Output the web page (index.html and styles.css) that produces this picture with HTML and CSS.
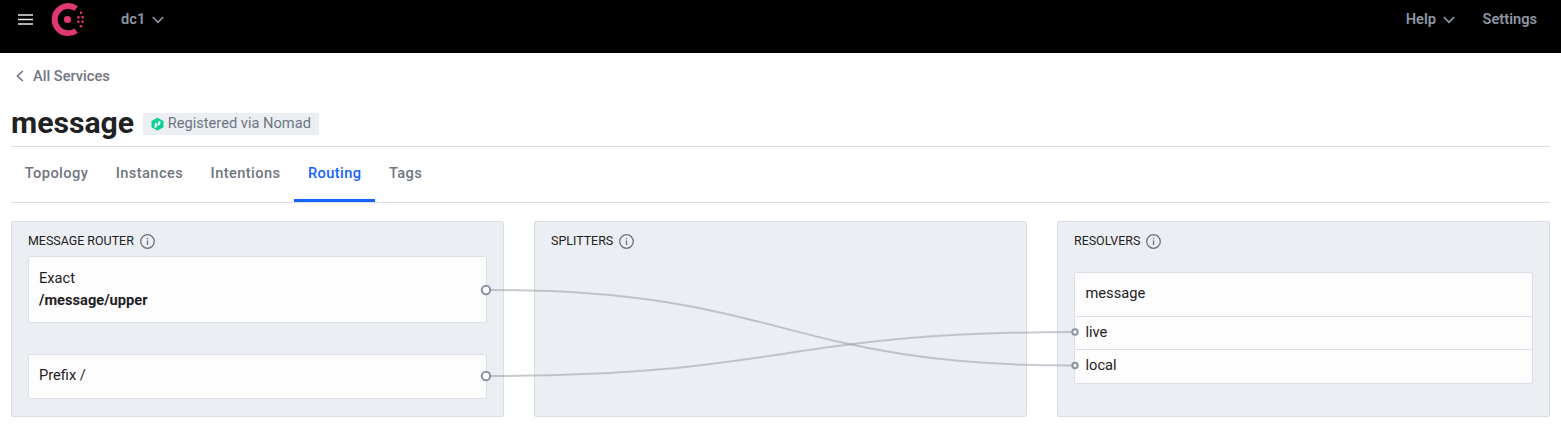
FILE: index.html
```html
<!DOCTYPE html>
<html lang="en">
<head>
<meta charset="utf-8">
<title>message - Consul</title>
<link rel="stylesheet" href="styles.css">
</head>
<body>
<header class="topbar">
  <svg class="menu-icon" width="15" height="11" viewBox="0 0 15 11"><path d="M0 1h15M0 5.5h15M0 10h15" stroke="#e6eaee" stroke-width="1.6"/></svg>
  <svg class="logo" width="34" height="34" viewBox="0 0 34 34" fill="#e03875">
    <path d="M26.9 29.9A16.5 16.5 0 1 1 26.9 3.3L23.4 7.8A10.7 10.7 0 1 0 23.4 25.4Z"/>
    <circle cx="16.5" cy="16.5" r="3.6"/>
    <circle cx="30" cy="9.7" r="1.3"/><circle cx="27.4" cy="14.2" r="1.3"/><circle cx="31.6" cy="14.2" r="1.3"/>
    <circle cx="27.4" cy="18.8" r="1.3"/><circle cx="31.6" cy="18.8" r="1.3"/><circle cx="30" cy="23.3" r="1.3"/>
  </svg>
  <a class="nav-link datacenter">dc1 <svg width="12" height="8" viewBox="0 0 12 8"><path d="M.8 1l5.2 5.3L11.2 1"/></svg></a>
  <a class="nav-link help">Help <svg width="12" height="8" viewBox="0 0 12 8"><path d="M.8 1l5.2 5.3L11.2 1"/></svg></a>
  <a class="nav-link">Settings</a>
</header>
<main class="page">
  <a class="back"><svg width="8" height="12" viewBox="0 0 8 12"><path d="M6.8 1L1.5 6l5.3 5"/></svg>All Services</a>
  <div class="title-row">
    <h1>message</h1>
    <span class="badge"><svg width="13" height="14" viewBox="0 0 12 14"><path fill="#06d092" d="M6 .7l6 3.2v6.4l-6 3.200-6-3.200V3.900z"/><path fill="#fff" d="M3.200 6.600L5 5.500v1.500l1.600.6V4.800L8.800 3.900v3.600L7 8.600 5.300 8V10l-2.100 1z"/></svg>Registered via Nomad</span>
  </div>
  <nav class="tabs">
    <a>Topology</a><a>Instances</a><a>Intentions</a><a class="selected">Routing</a><a>Tags</a>
  </nav>
  <div class="chain">
    <section class="panel">
      <h2>MESSAGE ROUTER <svg class="info" width="15" height="15" viewBox="0 0 15 15"><circle cx="7.500" cy="7.500" r="6.800"/><path d="M7.500 6.500v4.500M7.500 4v1.300"/></svg></h2>
      <div class="card route exact">Exact<b>/message/upper</b></div>
      <div class="card route">Prefix /</div>
    </section>
    <section class="panel">
      <h2>SPLITTERS <svg class="info" width="15" height="15" viewBox="0 0 15 15"><circle cx="7.500" cy="7.500" r="6.800"/><path d="M7.500 6.500v4.500M7.500 4v1.300"/></svg></h2>
    </section>
    <section class="panel">
      <h2>RESOLVERS <svg class="info" width="15" height="15" viewBox="0 0 15 15"><circle cx="7.500" cy="7.500" r="6.800"/><path d="M7.500 6.500v4.500M7.500 4v1.300"/></svg></h2>
      <div class="card resolver">
        <div class="name">message</div>
        <div class="subset">live</div>
        <div class="subset">local</div>
      </div>
    </section>
    <svg class="edges" width="1539" height="196" viewBox="11 221 1539 196">
      <path d="M490 290C782.500 290 782.500 365.500 1073 365.500"/>
      <path d="M490 376C782.500 376 782.500 332 1073 332"/>
      <circle cx="486" cy="290" r="4.200"/><circle cx="486" cy="376" r="4.200"/>
      <circle cx="1075" cy="332" r="2.700"/><circle cx="1075" cy="365.500" r="2.700"/>
    </svg>
  </div>
</main>
</body>
</html>
```
FILE: styles.css
```css
* { box-sizing: border-box; }
body { margin: 0; background: #fff; color: #1f2124; font: 14.650px/22px Roboto, sans-serif; }
svg { display: block; flex: none; }

.topbar { display: flex; height: 53px; padding: 0 24px 0 18px; background: #000; }
.menu-icon { margin-top: 14px; }
.logo { margin: 3px 0 0 18px; }
.nav-link { display: flex; gap: 6.500px; height: 22px; margin-top: 8px; align-items: center; color: #8e96a3; font-weight: 600; }
.nav-link svg, .back svg { fill: none; stroke: currentColor; stroke-width: 1.7; }
.nav-link svg { margin-top: 1px; }
.datacenter { margin-left: 36px; margin-right: auto; }
.help { margin-right: 28px; }

.page { padding: 0 11px; }
.back { display: flex; align-items: center; gap: 9px; height: 22px; margin-top: 12px; padding-left: 5px; color: #6f7682; font-weight: 500; }
.title-row { display: flex; height: 60px; padding-top: 18px; border-bottom: 1px solid #dbdde2; }
h1 { margin: 0; font-size: 30.200px; line-height: 36px; font-weight: 700; }
.badge { display: flex; align-items: center; gap: 3.500px; height: 22px; margin: 8px 0 0 9px; padding: 0 8px 2px; border-radius: 2px; background: #ebeef2; color: #6f7682; }
.badge svg { margin-top: 2px; }

.tabs { display: flex; height: 56px; border-bottom: 1px solid #dbdde5; }
.tabs a { padding: 15px 13.750px 0; color: #6f7682; font-weight: 500; letter-spacing: .4px; height: 55px; }
.tabs .selected { color: #1563ff; border-bottom: 3px solid #1563ff; }

.chain { position: relative; display: grid; grid-template-columns: repeat(3, 1fr); gap: 30px; height: 196px; margin-top: 18px; }
.panel { padding: 8px 16px; border: 1px solid #d9dde4; border-radius: 2px; background: #ebeef2; }
h2 { display: flex; align-items: center; gap: 6px; margin: 0; height: 22px; font-size: 12.450px; font-weight: 400; }
.info { margin-top: 1px; fill: none; stroke: #6f7378; stroke-width: 1.300; }
.card { border: 1px solid #dbdfe6; border-radius: 2px; background: #fdfdfd; }
.route { height: 45px; margin-top: 31px; padding: 9px 10px; }
.exact { height: 67px; margin-top: 4px; padding-top: 10px; }
.exact b { display: block; }
.resolver { margin-top: 20px; height: 112px; }
.resolver .name { height: 43px; padding: 9px 10.500px; }
.subset { height: 33px; border-top: 1px solid #dbdfe6; padding: 4px 10.500px; }
.edges { position: absolute; inset: 0; fill: none; stroke: #9a9ead; stroke-width: 2; }
.edges path { stroke-opacity: .55; }
.edges circle { fill: #fff; stroke: #8993a1; }
```
